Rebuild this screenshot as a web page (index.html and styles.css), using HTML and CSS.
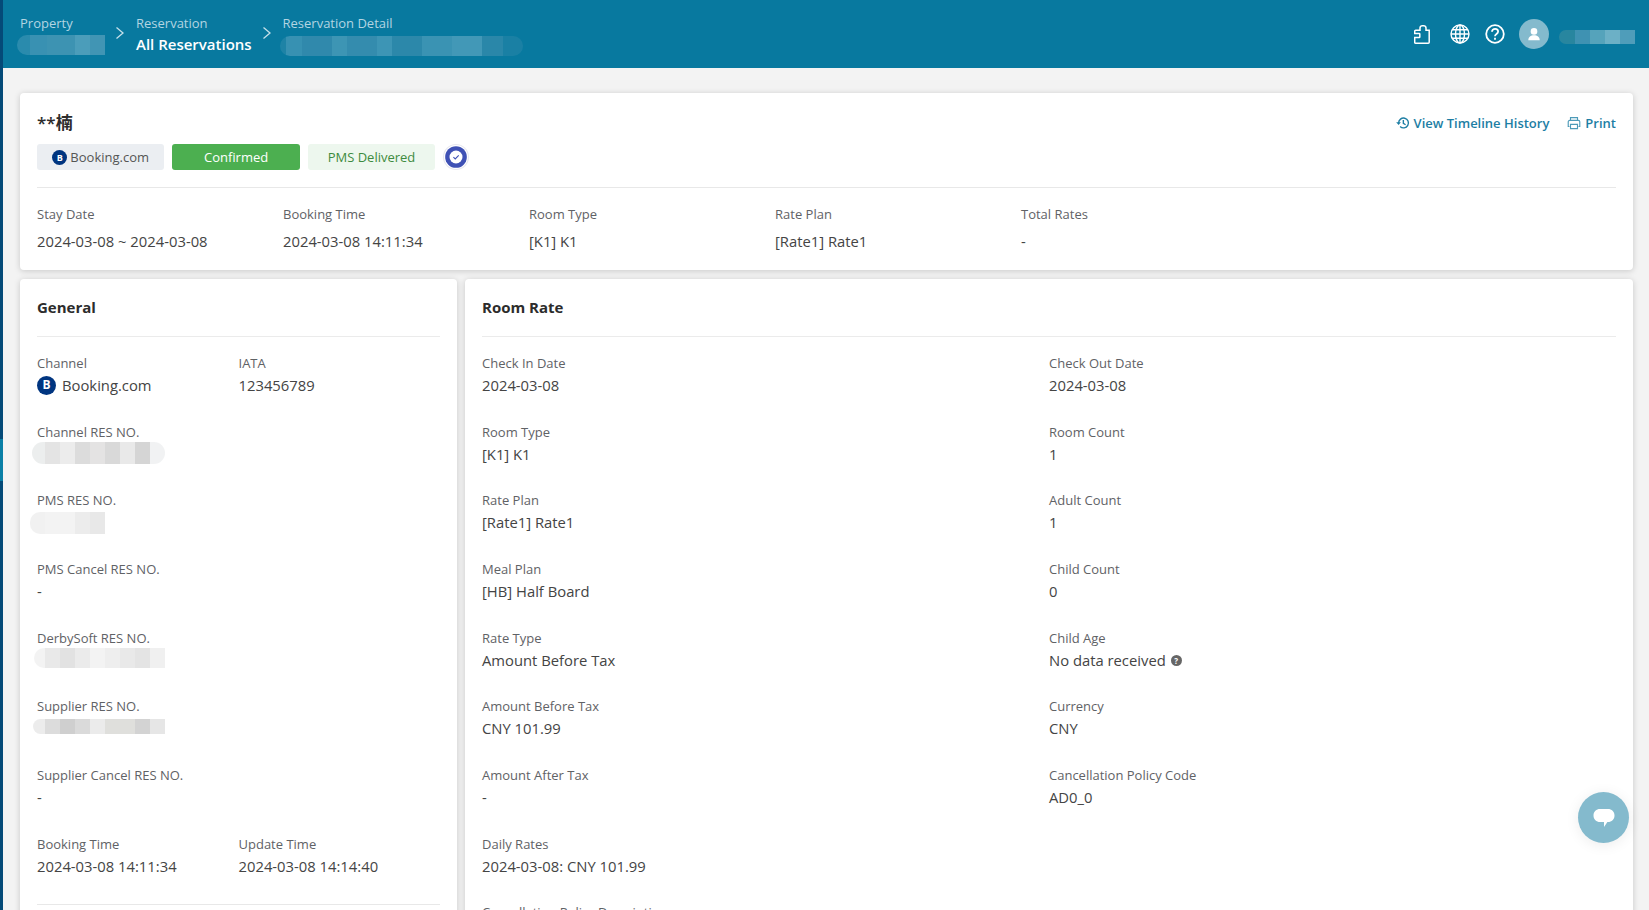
FILE: index.html
```html
<!DOCTYPE html>
<html lang="en">
<head>
<meta charset="utf-8">
<title>Reservation Detail</title>
<link rel="stylesheet" href="styles.css">
</head>
<body>
<div class="app">
  <div class="rail"><div class="rail-active"></div></div>
  <div class="main">
    <header class="topbar">
      <nav class="crumbs">
        <div class="crumb crumb-property">
          <div class="crumb-label">Property</div>
          <div class="mask mask-property"></div>
        </div>
        <svg class="chev" viewBox="0 0 10 14"><path d="M1.500 1.500 8 7l-6.500 5.500"/></svg>
        <div class="crumb crumb-res">
          <div class="crumb-label">Reservation</div>
          <div class="crumb-current">All Reservations</div>
        </div>
        <svg class="chev" viewBox="0 0 10 14"><path d="M1.500 1.500 8 7l-6.500 5.500"/></svg>
        <div class="crumb">
          <div class="crumb-label">Reservation Detail</div>
          <div class="mask mask-detail"></div>
        </div>
      </nav>
      <div class="top-actions">
        <svg class="ti ti-puzzle" viewBox="0 0 16 19"><path d="M1.700 5.200H6V2.800a2.300 2.300 0 0 1 2.300-2h1.400A2.300 2.300 0 0 1 12 2.800v2.400h3.200v12a1 1 0 0 1-1 1H1.700a1 1 0 0 1-1-1v-4.600H5.200a.6.600 0 0 0 .6-.6V9a.6.600 0 0 0-.6-.6H.7V6.200a1 1 0 0 1 1-1z"/></svg>
        <svg class="ti ti-globe" viewBox="0 0 20 20"><circle cx="10" cy="10" r="9"/><ellipse cx="10" cy="10" rx="4.500" ry="9"/><path d="M10 1v18M1 10h18M2.200 5.800h15.600M2.200 14.200h15.600"/></svg>
        <svg class="ti ti-help" viewBox="0 0 20 20"><circle cx="10" cy="10" r="8.800"/><path d="M7 7.800c0-1.700 1.300-2.900 3.100-2.900s3 1.100 3 2.600c0 2.500-3.100 2.300-3.100 4.700"/><path d="M10 13.700v2"/></svg>
        <div class="avatar"><svg viewBox="0 0 16 16"><circle cx="8" cy="5" r="3.800"/><path d="M1.500 15c0-3.600 2.800-5.500 6.500-5.500s6.500 1.900 6.500 5.500z"/></svg></div>
        <div class="mask mask-user"></div>
      </div>
    </header>

    <div class="content">
      <section class="card summary">
        <div class="summary-head">
          <div>
            <h1 class="guest">**楠</h1>
            <div class="chips">
              <span class="chip chip-channel"><span class="logo logo-sm">B</span>Booking.com</span>
              <span class="chip chip-confirmed">Confirmed</span>
              <span class="chip chip-pms">PMS Delivered</span>
              <span class="verified"><svg viewBox="0 0 24 24"><circle class="v-outer" cx="12" cy="12" r="11.500"/><circle class="v-ring" cx="12" cy="12" r="10"/><circle class="v-in" cx="12" cy="12" r="6"/><path class="v-check" d="M9.600 12.200l1.700 1.600 3.200-3.200"/></svg></span>
            </div>
          </div>
          <div class="links">
            <a class="link"><svg viewBox="0 0 16 16"><path d="M3 8a5.600 5.600 0 1 1 1.700 4"/><path class="fill" d="M.2 7.200h5.400L3 10.400z"/><path d="M8.400 4.600v3.900l2.600 1.500"/></svg>View Timeline History</a>
            <a class="link link-print"><svg viewBox="0 0 16 16"><path d="M4 5V1.800h8V5M2.800 12H1.400V6.600A1.600 1.600 0 0 1 3 5h10a1.600 1.600 0 0 1 1.600 1.600V12h-1.400M4 9.600h8v4.800H4z"/></svg>Print</a>
          </div>
        </div>
        <div class="summary-grid">
          <div><div class="label">Stay Date</div><div class="sval">2024-03-08 ~ 2024-03-08</div></div>
          <div><div class="label">Booking Time</div><div class="sval">2024-03-08 14:11:34</div></div>
          <div><div class="label">Room Type</div><div class="sval">[K1] K1</div></div>
          <div><div class="label">Rate Plan</div><div class="sval">[Rate1] Rate1</div></div>
          <div><div class="label">Total Rates</div><div class="sval">-</div></div>
        </div>
      </section>

      <div class="panels">
        <section class="card panel panel-left">
          <h2 class="panel-title">General</h2>
          <div class="fields">
            <div class="field"><div class="label">Channel</div><div class="value value-logo"><span class="logo logo-lg">B</span>Booking.com</div></div>
            <div class="field"><div class="label">IATA</div><div class="value">123456789</div></div>
            <div class="field wide"><div class="label">Channel RES NO.</div><div class="mask mask-channel"></div></div>
            <div class="field wide"><div class="label">PMS RES NO.</div><div class="mask mask-pmsno"></div></div>
            <div class="field wide"><div class="label">PMS Cancel RES NO.</div><div class="value">-</div></div>
            <div class="field wide"><div class="label">DerbySoft RES NO.</div><div class="mask mask-derby"></div></div>
            <div class="field wide"><div class="label">Supplier RES NO.</div><div class="mask mask-supplier"></div></div>
            <div class="field wide"><div class="label">Supplier Cancel RES NO.</div><div class="value">-</div></div>
            <div class="field"><div class="label">Booking Time</div><div class="value">2024-03-08 14:11:34</div></div>
            <div class="field"><div class="label">Update Time</div><div class="value">2024-03-08 14:14:40</div></div>
          </div>
          <div class="panel-rule"></div>
        </section>

        <section class="card panel panel-right">
          <h2 class="panel-title">Room Rate</h2>
          <div class="fields">
            <div class="field"><div class="label">Check In Date</div><div class="value">2024-03-08</div></div>
            <div class="field"><div class="label">Check Out Date</div><div class="value">2024-03-08</div></div>
            <div class="field"><div class="label">Room Type</div><div class="value">[K1] K1</div></div>
            <div class="field"><div class="label">Room Count</div><div class="value">1</div></div>
            <div class="field"><div class="label">Rate Plan</div><div class="value">[Rate1] Rate1</div></div>
            <div class="field"><div class="label">Adult Count</div><div class="value">1</div></div>
            <div class="field"><div class="label">Meal Plan</div><div class="value">[HB] Half Board</div></div>
            <div class="field"><div class="label">Child Count</div><div class="value">0</div></div>
            <div class="field"><div class="label">Rate Type</div><div class="value">Amount Before Tax</div></div>
            <div class="field"><div class="label">Child Age</div><div class="value">No data received<span class="hint">?</span></div></div>
            <div class="field"><div class="label">Amount Before Tax</div><div class="value">CNY 101.99</div></div>
            <div class="field"><div class="label">Currency</div><div class="value">CNY</div></div>
            <div class="field"><div class="label">Amount After Tax</div><div class="value">-</div></div>
            <div class="field"><div class="label">Cancellation Policy Code</div><div class="value">AD0_0</div></div>
            <div class="field wide"><div class="label">Daily Rates</div><div class="value">2024-03-08: CNY 101.99</div></div>
            <div class="field wide"><div class="label">Cancellation Policy Description</div></div>
          </div>
        </section>
      </div>
    </div>
  </div>
</div>
<button class="chat" aria-label="Chat"><svg viewBox="0 0 24 24"><path d="M8 3h8c3.600 0 6.500 2.600 6.500 6.500S19.600 16 16 16h-.6l-3.400 5v-5H8c-3.600 0-6.500-2.600-6.500-6.500S4.400 3 8 3z"/></svg></button>
</body>
</html>
```
FILE: styles.css
```css
* { box-sizing: border-box; }
html, body { margin: 0; height: 100%; overflow: hidden; }
body {
  font-family: "Open Sans", "Noto Sans CJK SC", sans-serif;
  background: #f3f3f3;
  color: #333;
}
.app { display: flex; height: 910px; overflow: hidden; }
.rail { width: 3px; flex: none; background: #044a78; padding-top: 439px; }
.rail-active { height: 42px; background: #0a7fa6; }
.main { flex: 1; min-width: 0; }

/* top bar */
.topbar {
  height: 68px;
  background: #08799f;
  display: flex;
  justify-content: space-between;
  padding: 0 14px 0 17px;
}
.crumbs { display: flex; align-items: flex-start; padding-top: 13px; }
.crumb-label { font-size: 13px; line-height: 20px; color: #b3d5e2; }
.crumb-current { font-size: 15px; line-height: 24px; margin-top: -1px; font-weight: 600; color: #fff; }
.crumb-property { width: 95px; }
.crumb-res { width: 125.500px; }
.chev { width: 10px; height: 14px; margin: 13px 11px 0 0; fill: none; stroke: #c5e0ea; stroke-width: 1.300; flex: none; }
.top-actions { display: flex; align-items: center; }
.ti { fill: none; stroke: #fff; stroke-width: 1.500; flex: none; }
.ti-puzzle { width: 16px; height: 19px; margin: 0 20px 0 1px; }
.ti-globe { width: 20px; height: 20px; margin-right: 15px; stroke-width: 1.400; }
.ti-help { width: 20px; height: 20px; margin-right: 14px; stroke-width: 1.800; }
.avatar {
  width: 30px; height: 30px; border-radius: 50%;
  background: #84bacd;
  display: flex; align-items: center; justify-content: center;
  margin-right: 10px;
}
.avatar svg { width: 14px; height: 14px; fill: #fff; }

/* mosaics standing in for redacted text */
.mask { border-radius: 10px 0 0 10px; }
.mask-property {
  width: 88px; height: 20px; margin: 2px 0 0 -3px;
  background: linear-gradient(90deg, #2a8bad 0 13px, #3991b2 13px 30px, #3d93b2 30px 58px, #4b9dba 58px 73px, #4195b4 73px 88px);
}
.mask-detail {
  width: 243px; height: 20px; margin: 3px 0 0 -3px; border-radius: 10px;
  background: linear-gradient(90deg, #1e83a6 0 6px, #3791b2 6px 22px, #3089ac 22px 52px, #3d95b4 52px 67px, #348cae 67px 97px, #3d95b5 97px 112px, #2c88aa 112px 142px, #3a93b3 142px 172px, #4298b7 172px 202px, #2a87a9 202px 223px, #1a80a4 223px 243px);
}
.mask-user {
  width: 76px; height: 14px; margin-top: 6px; border-radius: 7px 0 0 7px;
  background: linear-gradient(90deg, #28869f 0 16px, #3f92b2 16px 31px, #55a3bb 31px 46px, #6cb0c6 46px 61px, #4f9dba 61px 76px);
}
.mask-channel {
  width: 133px; height: 22px; margin: 0 0 0 -5px; border-radius: 11px;
  background: linear-gradient(90deg, #eceeee 0 13px, #e4e4e4 13px 28px, #ececec 28px 43px, #dcdcdc 43px 58px, #e4e3e3 58px 73px, #d9d9d9 73px 88px, #e9e9e9 88px 103px, #d5d5d5 103px 118px, #f1f2f3 118px 133px);
}
.mask-pmsno {
  width: 75px; height: 22px; margin: 2px 0 0 -7px;
  background: linear-gradient(90deg, #f1f1f1 0 15px, #f3f3f3 15px 45px, #ececec 45px 60px, #e8e8e8 60px 75px);
}
.mask-derby {
  width: 131px; height: 20px; margin: 0 0 0 -3px;
  background: linear-gradient(90deg, #f3f3f3 0 11px, #e9e9e9 11px 26px, #e2e2e2 26px 41px, #ebebeb 41px 56px, #f3f3f3 56px 71px, #eeeeee 71px 86px, #e9e9e9 86px 101px, #e4e4e4 101px 116px, #f0f0f0 116px 131px);
}
.mask-supplier {
  width: 132px; height: 15px; margin: 3px 0 0 -4px;
  background: linear-gradient(90deg, #ececec 0 12px, #dcdcdc 12px 27px, #cfcfcf 27px 42px, #dadada 42px 57px, #ebebeb 57px 72px, #dfdfdc 72px 102px, #d3d3d3 102px 117px, #e6e6e6 117px 132px);
}

/* cards */
.content { padding: 25px 16px 0 17px; }
.card { background: #fff; border-radius: 4px; box-shadow: 0 1px 6px rgba(0, 0, 0, .18); }
.summary { height: 177px; padding: 18px 17px 0; }
.summary-head { display: flex; justify-content: space-between; height: 77px; border-bottom: 1px solid #e8e8e8; }
.guest { margin: 0; font-size: 17px; line-height: 24px; font-weight: 600; color: #2c2c2c; }
.chips { display: flex; align-items: center; gap: 8px; margin-top: 9px; }
.chip {
  height: 26px; width: 127.400px; border-radius: 3px;
  display: flex; align-items: center; justify-content: center;
  font-size: 13px;
}
.chip-channel { background: #ebeef2; color: #555; }
.chip-confirmed { background: #4caf50; color: #fff; }
.chip-pms { background: #edf7ee; color: #3d8b40; }
.verified { width: 26px; height: 26px; }
.verified svg { width: 26px; height: 26px; display: block; }
.v-outer { fill: #fff; stroke: #e8e8f0; stroke-width: 1; }
.v-ring { fill: #3f51b5; }
.v-in { fill: #fff; }
.v-check { fill: none; stroke: #3f51b5; stroke-width: 1; }
.logo {
  border-radius: 50%;
  background: #003580; color: #fff;
  display: inline-flex; align-items: center; justify-content: center;
  font-weight: 700; flex: none;
}
.logo-sm { width: 15px; height: 15px; font-size: 9px; margin-right: 3px; }
.logo-lg { width: 19px; height: 19px; font-size: 12px; margin-right: 6px; }
.links { display: flex; gap: 18px; height: 24px; }
.link {
  display: flex; align-items: center; gap: 4px;
  font-size: 13px; font-weight: 550; color: #1d7ea4;
}
.link svg { width: 14px; height: 14px; fill: none; stroke: #1d7ea4; stroke-width: 1.600; }
.link svg .fill { fill: #1d7ea4; stroke: none; }
.link-print svg { stroke: #4d9ab8; stroke-width: 1.300; }
.summary-grid { display: grid; grid-template-columns: repeat(5, 246px); padding-top: 16px; }
.label { font-size: 13px; line-height: 20px; font-weight: 500; color: #5f6266; white-space: nowrap; }
.sval { font-size: 14.800px; line-height: 24px; margin-top: 4.500px; color: #444; }

.panels { display: flex; gap: 8px; margin-top: 9px; }
.panel { padding: 17px 17px 0; height: 700px; flex: none; }
.panel-left { width: 437px; }
.panel-right { width: 1168px; }
.panel-title {
  margin: 0; height: 41px; font-size: 15px; line-height: 22px; font-weight: 700; color: #2c2c2c;
  border-bottom: 1px solid #ebebeb;
}
.fields {
  display: grid; grid-template-columns: 1fr 1fr; grid-auto-rows: 68.670px; padding-top: 16px;
}
.field.wide { grid-column: 1 / -1; }
.value { font-size: 14.800px; line-height: 24px; color: #444; display: flex; align-items: center; white-space: nowrap; }
.hint {
  width: 11px; height: 11px; border-radius: 50%; margin: 1px 0 0 5px;
  background: #666; color: #fff; font-size: 8px; line-height: 11px; font-weight: 700; text-align: center;
}
.panel-rule { height: 1px; background: #e8e8e8; margin-top: 2px; }
.chat {
  position: fixed; left: 1578px; top: 792px;
  width: 51px; height: 51px; border: 0; border-radius: 50%; padding: 0;
  background: #84bacd; box-shadow: 0 2px 14px rgba(0, 0, 0, .08);
  display: flex; align-items: center; justify-content: center;
}
.chat svg { width: 24px; height: 24px; fill: #fff; }
```
